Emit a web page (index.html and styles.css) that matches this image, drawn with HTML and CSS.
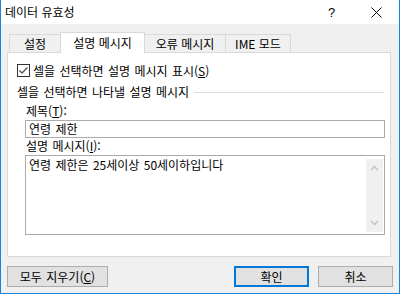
FILE: index.html
```html
<!DOCTYPE html>
<html lang="ko">
<head>
    <meta charset="UTF-8" />
    <title>데이터 유효성</title>
    <link rel="stylesheet" href="styles.css">
</head>
<body>
<div class="window">
    <div class="titlebar">
        <span class="title">데이터 유효성</span>
        <div class="title-btns">
            <span class="tbtn">?</span>
            <span class="tbtn">
                <svg width="11" height="11" viewBox="0 0 11 11"><path d="M0.5 0.5 L10.5 10.5 M10.5 0.5 L0.5 10.5" stroke="#000" stroke-width="1" fill="none"/></svg>
            </span>
        </div>
    </div>

    <div class="tabs">
        <div class="tab t1">설정</div>
        <div class="tab t2 active">설명 메시지</div>
        <div class="tab t3">오류 메시지</div>
        <div class="tab t4">IME 모드</div>
    </div>

    <div class="panel">
        <div class="check-row">
            <svg class="checkbox" width="13" height="13" viewBox="0 0 13 13">
                <rect x="0.5" y="0.5" width="12" height="12" fill="#fff" stroke="#333"/>
                <polyline points="2.5,6.5 5,9 10.5,3.5" fill="none" stroke="#555" stroke-width="1.4"/>
            </svg>
            <span>셀을 선택하면 설명 메시지 표시(<u>S</u>)</span>
        </div>

        <div class="group-head">
            <span>셀을 선택하면 나타낼 설명 메시지</span>
            <div class="rule"></div>
        </div>

        <div class="field">
            <div class="field-label">제목(<u>T</u>):</div>
            <div class="textbox">연령 제한</div>
            <div class="field-label">설명 메시지(<u>I</u>):</div>
            <div class="memo">
                <div class="memo-text">연령 제한은 25세이상 50세이하입니다</div>
                <div class="scrollbar">
                    <svg width="9" height="6" viewBox="0 0 9 6"><polyline points="1,5 4.5,1.5 8,5" fill="none" stroke="#c4c4c4" stroke-width="1.5"/></svg>
                    <svg width="9" height="6" viewBox="0 0 9 6"><polyline points="1,1 4.5,4.5 8,1" fill="none" stroke="#c4c4c4" stroke-width="1.5"/></svg>
                </div>
            </div>
        </div>
    </div>

    <div class="buttons">
        <button class="btn clear">모두 지우기(<u>C</u>)</button>
        <button class="btn ok">확인</button>
        <button class="btn cancel">취소</button>
    </div>
</div>
</body>
</html>
```

FILE: styles.css
```css
body {
  margin: 0;
  font-family: "Noto Sans CJK KR", "Noto Sans", sans-serif;
  font-size: 12px;
  color: #000;
  background: #fff;
}
.window {
  width: 400px;
  height: 294px;
  box-sizing: border-box;
  border: 1px solid #1883d7;
  border-top: none;
  background: #f0f0f0;
  display: flex;
  flex-direction: column;
}
.titlebar {
  height: 24px;
  background: #fff;
  display: flex;
  align-items: center;
  padding-left: 4px;
}
.title {
  line-height: 14px;
}
.title-btns {
  margin-left: auto;
  display: flex;
  height: 24px;
}
.tbtn {
  width: 45px;
  display: flex;
  align-items: center;
  justify-content: center;
  font-family: "Liberation Sans", sans-serif;
  font-size: 13px;
}
.tabs {
  height: 28px;
  display: flex;
  align-items: flex-end;
  padding-left: 8px;
}
.tab {
  height: 18px;
  box-sizing: border-box;
  border: 1px solid #d9d9d9;
  border-bottom: none;
  margin-left: -1px;
  display: flex;
  align-items: center;
  justify-content: center;
  line-height: 14px;
  background: #f0f0f0;
}
.t1 { width: 52px; margin-left: 0; }
.t2 { width: 85px; }
.t3 { width: 82px; }
.t4 { width: 66px; }
.tab.active {
  height: 21px;
  margin-bottom: -1px;
  background: #fff;
  padding-bottom: 1px;
  position: relative;
  z-index: 1;
}
.panel {
  margin-left: 6px;
  width: 384px;
  height: 205px;
  box-sizing: border-box;
  border: 1px solid #d9d9d9;
  background: #fff;
  padding: 11px 6px 0 9px;
}
.check-row {
  height: 13px;
  display: flex;
  align-items: center;
  gap: 3px;
  line-height: 14px;
  word-spacing: 1px;
}
.checkbox {
  flex: none;
}
.group-head {
  margin-top: 8px;
  height: 14px;
  display: flex;
  align-items: center;
  line-height: 14px;
  word-spacing: 1px;
}
.rule {
  flex: 1;
  height: 1px;
  background: #dcdcdc;
  margin-left: 5px;
}
.field {
  padding-left: 8px;
}
.field-label {
  margin-top: 5px;
  height: 14px;
  line-height: 14px;
  padding-left: 1px;
  word-spacing: 1px;
}
.field-label + .memo {
  margin-top: 2px;
}
.textbox + .field-label {
  margin-top: 1px;
}
.textbox {
  margin-top: 2px;
  width: 360px;
  height: 18px;
  box-sizing: border-box;
  border: 1px solid #ababab;
  padding-left: 3px;
  line-height: 15px;
  word-spacing: 1px;
}
.memo {
  width: 360px;
  height: 80px;
  box-sizing: border-box;
  border: 1px solid #ababab;
  display: flex;
}
.memo-text {
  flex: 1;
  padding: 2px 0 0 3px;
  line-height: 14px;
  word-spacing: 1px;
}
.scrollbar {
  width: 17px;
  margin: 3px 1px 2px 0;
  background: #f0f0f0;
  display: flex;
  flex-direction: column;
  align-items: center;
  justify-content: space-between;
  padding: 6px 0 6px;
  box-sizing: border-box;
}
.buttons {
  margin-top: 9px;
  display: flex;
  padding: 0 6px;
}
.btn {
  height: 21px;
  width: 75px;
  box-sizing: border-box;
  border: 1px solid #adadad;
  background: #e1e1e1;
  font-family: inherit;
  font-size: 12px;
  line-height: 14px;
  padding: 0;
  color: #000;
  word-spacing: 1px;
}
.btn.clear {
  width: 101px;
}
.btn.ok {
  margin-left: auto;
  border: 2px solid #0078d7;
}
.btn.cancel {
  margin-left: 9px;
}
```
